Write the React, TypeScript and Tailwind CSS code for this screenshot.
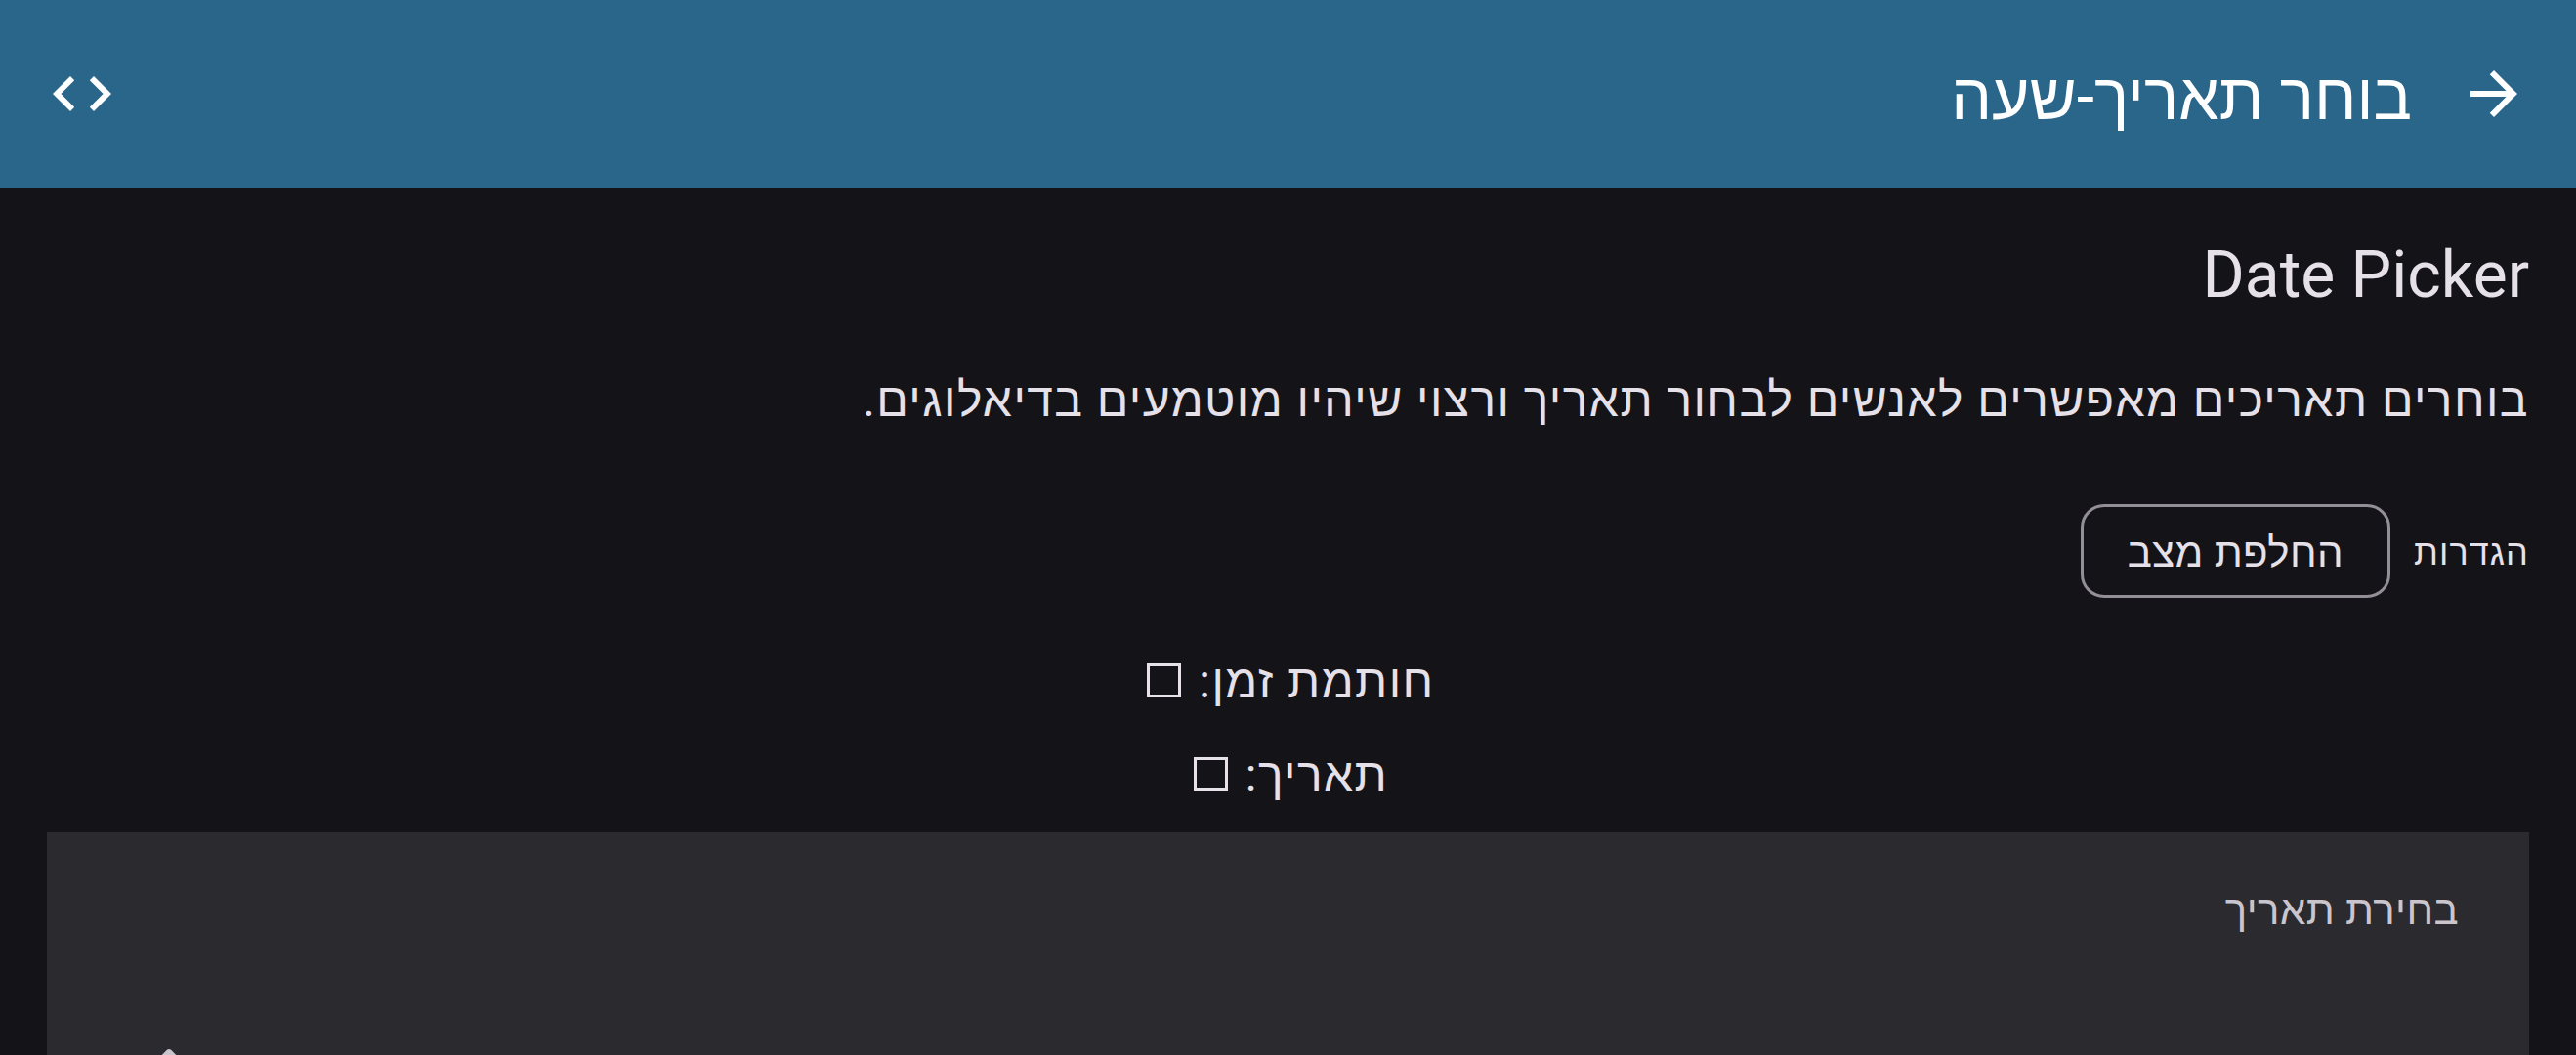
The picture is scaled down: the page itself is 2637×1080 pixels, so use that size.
import { useId } from "react";

function PendingValue({ label }: { label: string }) {
  const id = useId();
  return (
    <div className="flex items-baseline gap-[18px]">
      <label htmlFor={id}>{label}</label>
      <input
        id={id}
        type="checkbox"
        className="ml-[6px] size-[35px] appearance-none border-[3px] border-[#e6e1e9] bg-transparent checked:bg-[#e6e1e9]"
      />
    </div>
  );
}

export default function App() {
  return (
    <div
      dir="rtl"
      lang="he"
      className="flex h-screen flex-col overflow-hidden bg-[#141318] font-['Roboto','Liberation_Sans',sans-serif] text-[48px] leading-[72px] text-[#e6e1e9]"
    >
      <header className="flex h-[192px] shrink-0 items-center gap-12 bg-[#296689] px-12 text-white">
        <button type="button" aria-label="חזרה" className="size-[72px]">
          <svg viewBox="0 0 24 24" fill="currentColor" className="size-full">
            <path d="M12 4l-1.41 1.41L16.17 11H4v2h12.17l-5.58 5.59L12 20l8-8z" />
          </svg>
        </button>
        <h1 className="flex-1 pt-2 text-[66px] leading-[84px]">בוחר תאריך-שעה</h1>
        <button type="button" aria-label="קוד" className="size-[72px]">
          <svg viewBox="0 0 24 24" fill="currentColor" className="size-full">
            <path d="M9.4 16.6L4.8 12l4.6-4.6L8 6l-6 6 6 6 1.4-1.4zm5.2 0l4.6-4.6-4.6-4.6L16 6l6 6-6 6-1.4-1.4z" />
          </svg>
        </button>
      </header>

      <main className="flex flex-1 flex-col px-12 pt-12">
        <h2 className="text-[66px] leading-[84px]">Date Picker</h2>
        <p className="mt-[50px] tracking-[0.03em]">
          בוחרים תאריכים מאפשרים לאנשים לבחור תאריך ורצוי שיהיו מוטמעים בדיאלוגים.
        </p>

        <div className="mt-[70px] flex items-center gap-6">
          <span className="pt-1 text-[36px] leading-[48px] tracking-[0.03em]">הגדרות</span>
          <button
            type="button"
            className="flex h-24 items-center rounded-3xl border-[3px] border-[#938f96] px-[45px] pt-1 text-[42px] leading-[60px] tracking-[0.01em]"
          >
            החלפת מצב
          </button>
        </div>

        <div className="mt-[50px] flex flex-col items-center gap-6 tracking-[0.03em]">
          <PendingValue label="חותמת זמן:" />
          <PendingValue label="תאריך:" />
        </div>

        <section className="mt-[22px] flex flex-col bg-[#2b2a2f] pt-[50px] pr-[72px] pl-9">
          <h3 className="text-[42px] leading-[60px] tracking-[0.01em] text-[#cac5cd]">בחירת תאריך</h3>
          <button type="button" aria-label="עריכה" className="mt-[67px] size-36 self-end p-9">
            <svg viewBox="0 0 24 24" fill="#cac5cd" className="size-full">
              <path d="M14.06 9.02l.92.92L5.92 19H5v-.92l9.06-9.06M17.66 3c-.25 0-.51.1-.7.29l-1.83 1.83 3.75 3.75 1.83-1.83c.39-.39.39-1.02 0-1.41l-2.34-2.34c-.2-.2-.45-.29-.71-.29zm-3.6 3.19L3 17.25V21h3.75L17.81 9.94l-3.75-3.75z" />
            </svg>
          </button>
        </section>
      </main>
    </div>
  );
}
